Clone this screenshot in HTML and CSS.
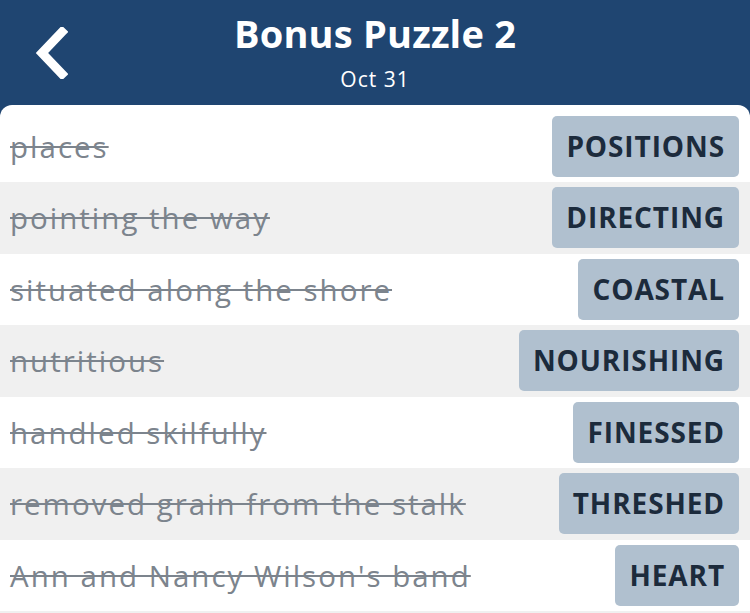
FILE: index.html
```html
<!DOCTYPE html>
<html lang="en">
<head>
    <meta charset="UTF-8">
    <meta name="viewport" content="width=device-width, initial-scale=1.0">
    <title>Bonus Puzzle 2</title>
    <link rel="stylesheet" href="styles.css">
</head>
<body>
    <header class="top-bar">
        <a class="back" href="#" aria-label="Back">
            <svg width="34" height="52" viewBox="0 0 34 52">
                <path d="M28 5 L8 26 L28 47" fill="none" stroke="#fff" stroke-width="9" stroke-linecap="square" stroke-linejoin="miter"/>
            </svg>
        </a>
        <div class="title-block">
            <h1>Bonus Puzzle 2</h1>
            <div class="date">Oct 31</div>
        </div>
    </header>

    <!-- Список ответов -->
    <div class="clue-list">
        <div class="clue-row">
            <span class="clue">places</span>
            <span class="answer">POSITIONS</span>
        </div>
        <div class="clue-row">
            <span class="clue">pointing the way</span>
            <span class="answer">DIRECTING</span>
        </div>
        <div class="clue-row">
            <span class="clue">situated along the shore</span>
            <span class="answer">COASTAL</span>
        </div>
        <div class="clue-row">
            <span class="clue">nutritious</span>
            <span class="answer">NOURISHING</span>
        </div>
        <div class="clue-row">
            <span class="clue">handled skilfully</span>
            <span class="answer">FINESSED</span>
        </div>
        <div class="clue-row">
            <span class="clue">removed grain from the stalk</span>
            <span class="answer">THRESHED</span>
        </div>
        <div class="clue-row">
            <span class="clue">Ann and Nancy Wilson's band</span>
            <span class="answer">HEART</span>
        </div>
        <div class="clue-row"></div>
    </div>
</body>
</html>
```

FILE: styles.css
```css
body {
    font-family: "Open Sans", Arial, sans-serif;
    background-color: #1f4571;
    margin: 0;
    padding: 0;
    height: 613px;
    overflow: hidden;
}

.top-bar {
    position: relative;
    height: 105px;
    display: flex;
    justify-content: center;
    align-items: flex-start;
    color: #ffffff;
}

.back {
    position: absolute;
    left: 34px;
    top: 27px;
}

.title-block {
    text-align: center;
    padding-top: 11px;
}

.title-block h1 {
    margin: 0;
    font-size: 38px;
    font-weight: 700;
    line-height: 44px;
    letter-spacing: 0.2px;
}

.date {
    font-size: 21px;
    line-height: 26px;
    margin-top: 11px;
    letter-spacing: 1px;
}

.clue-list {
    background-color: #ffffff;
    border-radius: 12px 12px 0 0;
    padding-top: 5.5px;
    height: 502.5px;
    overflow: hidden;
}

.clue-row {
    display: flex;
    justify-content: space-between;
    align-items: center;
    height: 71.5px;
    padding: 0 11px 0 10px;
}

.clue-row:nth-child(even) {
    background-color: #f0f0f0;
}

.clue {
    font-size: 29.5px;
    letter-spacing: 2px;
    color: #7c848d;
    text-decoration: line-through;
    text-decoration-thickness: 2px;
}

.answer {
    background-color: #b0c0cf;
    color: #1c2b3c;
    font-size: 28px;
    font-weight: 700;
    letter-spacing: 0.9px;
    height: 61px;
    line-height: 61px;
    padding: 0 14px;
    border-radius: 5px;
}
```
